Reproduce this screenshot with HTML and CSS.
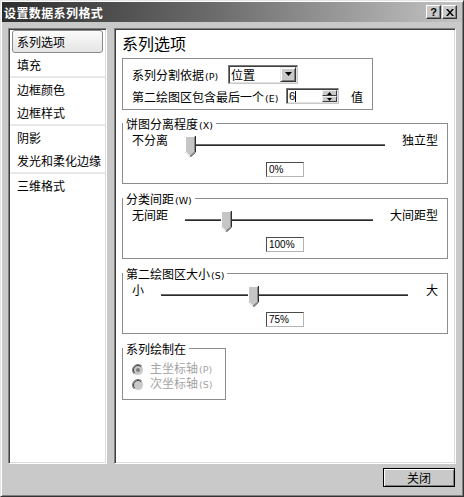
FILE: index.html
```html
<!DOCTYPE html>
<html lang="zh-CN">
<head>
<meta charset="utf-8">
<title>设置数据系列格式</title>
<link rel="stylesheet" href="styles.css">
</head>
<body>
<div class="window">
  <div class="titlebar">
    <span class="title">设置数据系列格式</span>
    <div class="tbtns">
      <span class="tbtn help">?</span>
      <span class="tbtn"><svg width="8" height="7" viewBox="0 0 8 7"><path d="M0 0h2l2 2.4L6 0h2L5 3.5L8 7H6L4 4.6L2 7H0l3-3.5z" fill="#000"/></svg></span>
    </div>
  </div>
  <div class="main">
    <ul class="nav">
      <li class="item sel">系列选项</li>
      <li class="item">填充</li>
      <li class="sep"></li>
      <li class="item">边框颜色</li>
      <li class="item">边框样式</li>
      <li class="sep"></li>
      <li class="item">阴影</li>
      <li class="item">发光和柔化边缘</li>
      <li class="sep"></li>
      <li class="item">三维格式</li>
    </ul>
    <div class="panel">
      <h1 class="heading">系列选项</h1>
      <div class="box">
        <div class="row">
          <span class="lbl-a">系列分割依据<span class="acc">(P)</span></span>
          <div class="combo">
            <span class="combo-text">位置</span>
            <span class="combo-btn"><svg width="7" height="4" viewBox="0 0 7 4"><path d="M0 0H7L3.5 4Z" fill="#000"/></svg></span>
          </div>
        </div>
        <div class="row">
          <span class="lbl-b">第二绘图区包含最后一个<span class="acc">(E)</span></span>
          <div class="spin">
            <span class="spin-text">6<span class="caret"></span></span>
            <span class="spin-btns">
              <span class="spin-half"><svg width="5" height="3" viewBox="0 0 5 3"><path d="M2.5 0L5 3H0Z" fill="#000"/></svg></span>
              <span class="spin-half"><svg width="5" height="3" viewBox="0 0 5 3"><path d="M0 0H5L2.5 3Z" fill="#000"/></svg></span>
            </span>
          </div>
          <span class="val">值</span>
        </div>
      </div>

      <fieldset class="grp">
        <legend>饼图分离程度<span class="acc">(X)</span></legend>
        <div class="srow g2">
          <span class="sl">不分离</span>
          <div class="slider">
            <div class="track"></div>
            <svg class="thumb" style="left:0px" width="11" height="21" viewBox="0 0 11 21"><path d="M0 0H10V16L5 21L0 16Z" fill="#c6c6c6"/><path d="M5 20.3L0.5 15.8V0.5H9.5" fill="none" stroke="#fff"/><path d="M10.5 0V16.2L5.3 21" fill="none" stroke="#303030"/><path d="M9.5 1V15.8L5 20" fill="none" stroke="#8a8a8a"/></svg>
          </div>
          <span class="sr">独立型</span>
        </div>
        <div class="field">0%</div>
      </fieldset>

      <fieldset class="grp">
        <legend>分类间距<span class="acc">(W)</span></legend>
        <div class="srow g3">
          <span class="sl">无间距</span>
          <div class="slider">
            <div class="track"></div>
            <svg class="thumb" style="left:41px" width="11" height="21" viewBox="0 0 11 21"><path d="M0 0H10V16L5 21L0 16Z" fill="#c6c6c6"/><path d="M5 20.3L0.5 15.8V0.5H9.5" fill="none" stroke="#fff"/><path d="M10.5 0V16.2L5.3 21" fill="none" stroke="#303030"/><path d="M9.5 1V15.8L5 20" fill="none" stroke="#8a8a8a"/></svg>
          </div>
          <span class="sr">大间距型</span>
        </div>
        <div class="field">100%</div>
      </fieldset>

      <fieldset class="grp">
        <legend>第二绘图区大小<span class="acc">(S)</span></legend>
        <div class="srow g4">
          <span class="sl">小</span>
          <div class="slider">
            <div class="track"></div>
            <svg class="thumb" style="left:92px" width="11" height="21" viewBox="0 0 11 21"><path d="M0 0H10V16L5 21L0 16Z" fill="#c6c6c6"/><path d="M5 20.3L0.5 15.8V0.5H9.5" fill="none" stroke="#fff"/><path d="M10.5 0V16.2L5.3 21" fill="none" stroke="#303030"/><path d="M9.5 1V15.8L5 20" fill="none" stroke="#8a8a8a"/></svg>
          </div>
          <span class="sr">大</span>
        </div>
        <div class="field">75%</div>
      </fieldset>

      <fieldset class="grp g5">
        <legend>系列绘制在</legend>
        <div class="radio-row">
          <svg class="radio" width="12" height="12" viewBox="0 0 12 12"><circle cx="6" cy="6" r="5.5" fill="#c9c9c9"/><path d="M9.9 2.1A5.5 5.5 0 0 0 2.1 9.9" fill="none" stroke="#808080"/><path d="M9.2 2.8A4.5 4.5 0 0 0 2.8 9.2" fill="none" stroke="#404040"/><path d="M2.1 9.9A5.5 5.5 0 0 0 9.9 2.1" fill="none" stroke="#fff"/><circle cx="6" cy="6" r="2" fill="#808080"/></svg>
          <span class="rtext">主坐标轴<span class="acc">(P)</span></span>
        </div>
        <div class="radio-row">
          <svg class="radio" width="12" height="12" viewBox="0 0 12 12"><circle cx="6" cy="6" r="5.5" fill="#c9c9c9"/><path d="M9.9 2.1A5.5 5.5 0 0 0 2.1 9.9" fill="none" stroke="#808080"/><path d="M9.2 2.8A4.5 4.5 0 0 0 2.8 9.2" fill="none" stroke="#404040"/><path d="M2.1 9.9A5.5 5.5 0 0 0 9.9 2.1" fill="none" stroke="#fff"/></svg>
          <span class="rtext">次坐标轴<span class="acc">(S)</span></span>
        </div>
      </fieldset>
    </div>
  </div>
  <div class="footer">
    <button class="btn" type="button">关闭</button>
  </div>
</div>
</body>
</html>
```

FILE: styles.css
```css
* { box-sizing: border-box; }
html, body { margin: 0; padding: 0; }
body {
  width: 464px;
  height: 497px;
  overflow: hidden;
  background: #c9c9c9;
  font-family: "Noto Sans CJK SC", "Noto Sans", sans-serif;
  font-size: 12px;
  color: #000;
}
.window {
  width: 464px;
  height: 497px;
  display: flex;
  flex-direction: column;
  background: #c9c9c9;
  border: 1px solid;
  border-color: #e4e4e4 #333 #333 #e4e4e4;
  box-shadow: inset 1px 1px #fff, inset -1px -1px #808080;
  padding: 1px;
}
.titlebar {
  height: 20px;
  flex: none;
  display: flex;
  align-items: center;
  padding-left: 2px;
  background: linear-gradient(to right, #2e2e2e, #6a6a6a 45%, #c4c4c4);
}
.title {
  flex: 1;
  color: #fff;
  font-weight: bold;
  font-size: 12px;
  letter-spacing: 0.4px;
  line-height: 20px;
  padding-top: 1px;
}
.tbtns {
  display: flex;
  gap: 1px;
  margin-right: 5px;
}
.tbtn {
  width: 15px;
  height: 14px;
  display: flex;
  align-items: center;
  justify-content: center;
  background: #c9c9c9;
  border: 1px solid;
  border-color: #fff #333 #333 #fff;
  box-shadow: inset -1px -1px #808080;
}
.help {
  font-family: "Liberation Sans", sans-serif;
  font-weight: bold;
  font-size: 11px;
  line-height: 12px;
}
.main {
  display: flex;
  gap: 7px;
  padding: 6px 6px 0 6px;
}
.nav {
  width: 99px;
  height: 436px;
  margin: 0;
  padding: 1px;
  list-style: none;
  background: #fff;
  border: 1px solid;
  border-color: #808080 #fff #fff #808080;
  box-shadow: inset 1px 1px #404040, inset -1px -1px #dcdcdc;
}
.item {
  height: 23px;
  margin: 0 2px;
  padding-left: 4px;
  border: 1px solid transparent;
  border-radius: 3px;
  line-height: 21px;
  white-space: nowrap;
}
.item.sel {
  border-color: #8a8a8a;
  background: linear-gradient(#fbfbfb, #e4e4e4);
}
.sep {
  height: 2px;
  background: #e8e8e8;
}
.panel {
  width: 342px;
  height: 436px;
  padding: 4px 7px 0 7px;
  background: #fff;
  border: 1px solid;
  border-color: #808080 #fff #fff #808080;
  box-shadow: inset 1px 1px #404040, inset -1px -1px #dcdcdc;
}
.heading {
  margin: 0;
  font-size: 16px;
  font-weight: normal;
  line-height: 20px;
}
.acc {
  font-family: "DejaVu Sans", sans-serif;
  font-size: 9.5px;
  line-height: 1;
  margin-left: 1px;
}
.box {
  margin-top: 5px;
  width: 251px;
  height: 52px;
  border: 1px solid #8c8c8c;
  padding: 5px 0 0 9px;
  display: flex;
  flex-direction: column;
  gap: 2px;
}
.row {
  display: flex;
  align-items: center;
  height: 20px;
  white-space: nowrap;
}
.lbl-a { width: 96px; }
.lbl-b { width: 154px; }
.combo {
  width: 70px;
  height: 19px;
  display: flex;
  padding: 1px;
  background: #fff;
  border: 1px solid;
  border-color: #7a7a7a #c8c8c8 #c8c8c8 #7a7a7a;
  box-shadow: inset 1px 1px #404040, inset -1px -1px #e2e2e2;
}
.combo-text {
  flex: 1;
  padding-left: 1px;
  line-height: 15px;
}
.combo-btn {
  width: 16px;
  height: 15px;
  display: flex;
  align-items: center;
  justify-content: center;
  background: #c9c9c9;
  border: 1px solid;
  border-color: #e8e8e8 #333 #333 #e8e8e8;
  box-shadow: inset 1px 1px #fff, inset -1px -1px #808080;
}
.spin {
  width: 53px;
  height: 16px;
  display: flex;
  padding: 1px;
  background: #fff;
  border: 1px solid;
  border-color: #7a7a7a #c8c8c8 #c8c8c8 #7a7a7a;
  box-shadow: inset 1px 1px #404040, inset -1px -1px #e2e2e2;
}
.spin-text {
  flex: 1;
  display: flex;
  align-items: center;
  padding-left: 1px;
  font-family: "Liberation Sans", sans-serif;
  font-size: 11px;
  line-height: 12px;
}
.caret {
  width: 1px;
  height: 11px;
  background: #000;
}
.spin-btns {
  width: 15px;
  display: flex;
  flex-direction: column;
}
.spin-half {
  height: 6px;
  display: flex;
  align-items: center;
  justify-content: center;
  background: #c9c9c9;
  border: 1px solid;
  border-color: #f0f0f0 #404040 #404040 #f0f0f0;
}
.val { margin-left: 12px; }

.grp {
  margin: 6px 0 0;
  min-width: 0;
  border: 1px solid #8c8c8c;
  padding: 0 9px 6px;
}
.grp + .grp { margin-top: 7px; }
.grp legend {
  padding: 0 3px;
  margin-left: -9px;
  font-size: 12px;
  line-height: 15px;
  height: 15px;
  white-space: nowrap;
}
.srow {
  display: flex;
  align-items: flex-start;
  height: 25px;
  margin-top: 1px;
}
.sl, .sr {
  line-height: 16px;
  white-space: nowrap;
}
.slider {
  position: relative;
  flex: 1;
  height: 21px;
  margin-top: 4px;
}
.g2 .slider { margin-left: 17px; margin-right: 12px; }
.g3 .slider { margin-left: 12px; margin-right: 12px; }
.g4 .slider { margin-left: 12px; margin-right: 13px; }
.track {
  margin: 8px 5px 0;
  height: 2px;
  border-top: 1px solid #6a6a6a;
  border-bottom: 1px solid #2a2a2a;
}
.thumb {
  position: absolute;
  top: 0;
}
.field {
  width: 38px;
  height: 15px;
  margin: 5px auto 0;
  padding-left: 2px;
  border: 1px solid;
  border-color: #4a4a4a #b4b4b4 #b4b4b4 #4a4a4a;
  font-family: "Liberation Sans", sans-serif;
  font-size: 10px;
  line-height: 13px;
}
.g5 {
  width: 104px;
  padding: 6px 9px 7px;
}
.radio-row {
  display: flex;
  align-items: center;
  height: 15px;
  color: #a4a4a4;
  white-space: nowrap;
  font-family: "Liberation Sans", "Noto Sans CJK SC", sans-serif;
}
.rtext {
  line-height: 15px;
}
.radio {
  margin-right: 6px;
  flex: none;
}
.footer {
  display: flex;
  justify-content: flex-end;
  padding: 4px 7px 0 0;
}
.btn {
  width: 72px;
  height: 19px;
  padding: 0;
  background: #c9c9c9;
  border: 1px solid #000;
  box-shadow: inset 1px 1px #fff, inset -1px -1px #808080;
  font-family: "Noto Sans CJK SC", sans-serif;
  font-size: 12px;
  line-height: 15px;
  color: #000;
}
```
